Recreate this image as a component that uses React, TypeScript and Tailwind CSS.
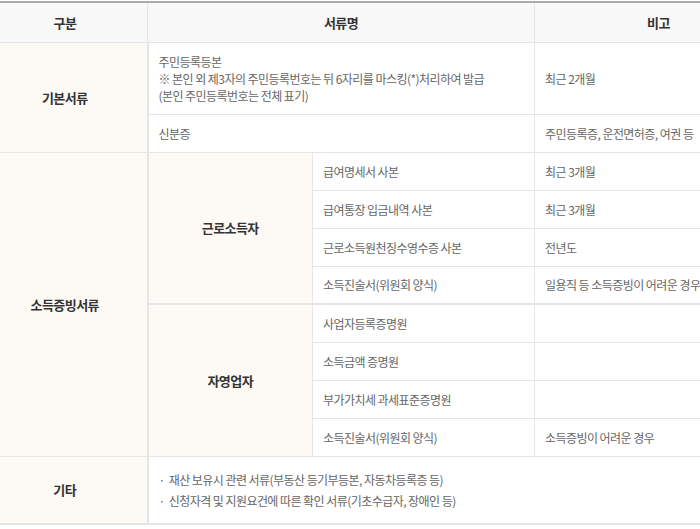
import React from "react";

const font = { fontFamily: '"Noto Sans CJK KR", "Noto Sans", sans-serif' };

const cell = "border border-[#e5e5e5] px-[10px] text-left align-middle";
const catCell = "border border-[#e5e5e5] bg-[#fdfaf5] text-center align-middle font-bold text-[#333] text-[13px]";

const workers = [
  ["급여명세서 사본", "최근 3개월"],
  ["급여통장 입금내역 사본", "최근 3개월"],
  ["근로소득원천징수영수증 사본", "전년도"],
  ["소득진술서(위원회 양식)", "일용직 등 소득증빙이 어려운 경우"],
];

const selfEmployed = [
  ["사업자등록증명원", ""],
  ["소득금액 증명원", ""],
  ["부가가치세 과세표준증명원", ""],
  ["소득진술서(위원회 양식)", "소득증빙이 어려운 경우"],
];

export default function App() {
  return (
    <div className="w-[700px] h-[529px] overflow-hidden bg-white pt-px" style={font}>
      <table className="ml-[-18px] w-[800px] table-fixed border-collapse text-[12px] leading-[17px] text-[#666] tracking-[-0.55px]">
        <colgroup>
          <col className="w-[165px]" />
          <col className="w-[165px]" />
          <col className="w-[222px]" />
          <col className="w-[248px]" />
        </colgroup>
        <thead>
          <tr className="h-[40px] bg-[#f8f8f8]">
            <th className="border border-[#e5e5e5] border-t-2 border-t-[#aaa] text-center font-bold text-[#333] text-[13px]">구분</th>
            <th colSpan={2} className="border border-[#e5e5e5] border-t-2 border-t-[#aaa] text-center font-bold text-[#333] text-[13px]">서류명</th>
            <th className="border border-[#e5e5e5] border-t-2 border-t-[#aaa] text-center font-bold text-[#333] text-[13px]">비고</th>
          </tr>
        </thead>
        <tbody>
          <tr className="h-[72px]">
            <td rowSpan={2} className={`${catCell} border-r-2`}>기본서류</td>
            <td colSpan={2} className={cell}>
              주민등록등본
              <br />
              ※ 본인 외 제3자의 주민등록번호는 뒤 6자리를 마스킹(*)처리하여 발급
              <br />
              (본인 주민등록번호는 전체 표기)
            </td>
            <td className={cell}>최근 2개월</td>
          </tr>
          <tr className="h-[38px]">
            <td colSpan={2} className={cell}>신분증</td>
            <td className={`${cell} whitespace-nowrap`}>주민등록증, 운전면허증, 여권 등</td>
          </tr>

          {workers.map(([doc, note], i) => (
            <tr key={doc + i} className="h-[38px]">
              {i === 0 && (
                <>
                  <td rowSpan={8} className={`${catCell} border-r-2`}>소득증빙서류</td>
                  <td rowSpan={4} className={`${catCell} border-b-2`}>근로소득자</td>
                </>
              )}
              <td className={`${cell} whitespace-nowrap ${i === 3 ? "border-b-2" : ""}`}>{doc}</td>
              <td className={`${cell} whitespace-nowrap ${i === 3 ? "border-b-2" : ""}`}>{note}</td>
            </tr>
          ))}

          {selfEmployed.map(([doc, note], i) => (
            <tr key={doc + i} className="h-[38px]">
              {i === 0 && <td rowSpan={4} className={catCell}>자영업자</td>}
              <td className={`${cell} whitespace-nowrap`}>{doc}</td>
              <td className={`${cell} whitespace-nowrap`}>{note}</td>
            </tr>
          ))}

          <tr className="h-[68px]">
            <td className={`${catCell} border-r-2 border-b-2`}>기타</td>
            <td colSpan={3} className={`${cell} border-b-2 leading-[21px]`}>
              <div className="flex flex-col">
                <span>
                  <span className="mr-[4px]">·</span>재산 보유시 관련 서류(부동산 등기부등본, 자동차등록증 등)
                </span>
                <span>
                  <span className="mr-[4px]">·</span>신청자격 및 지원요건에 따른 확인 서류(기초수급자, 장애인 등)
                </span>
              </div>
            </td>
          </tr>
        </tbody>
      </table>
    </div>
  );
}
